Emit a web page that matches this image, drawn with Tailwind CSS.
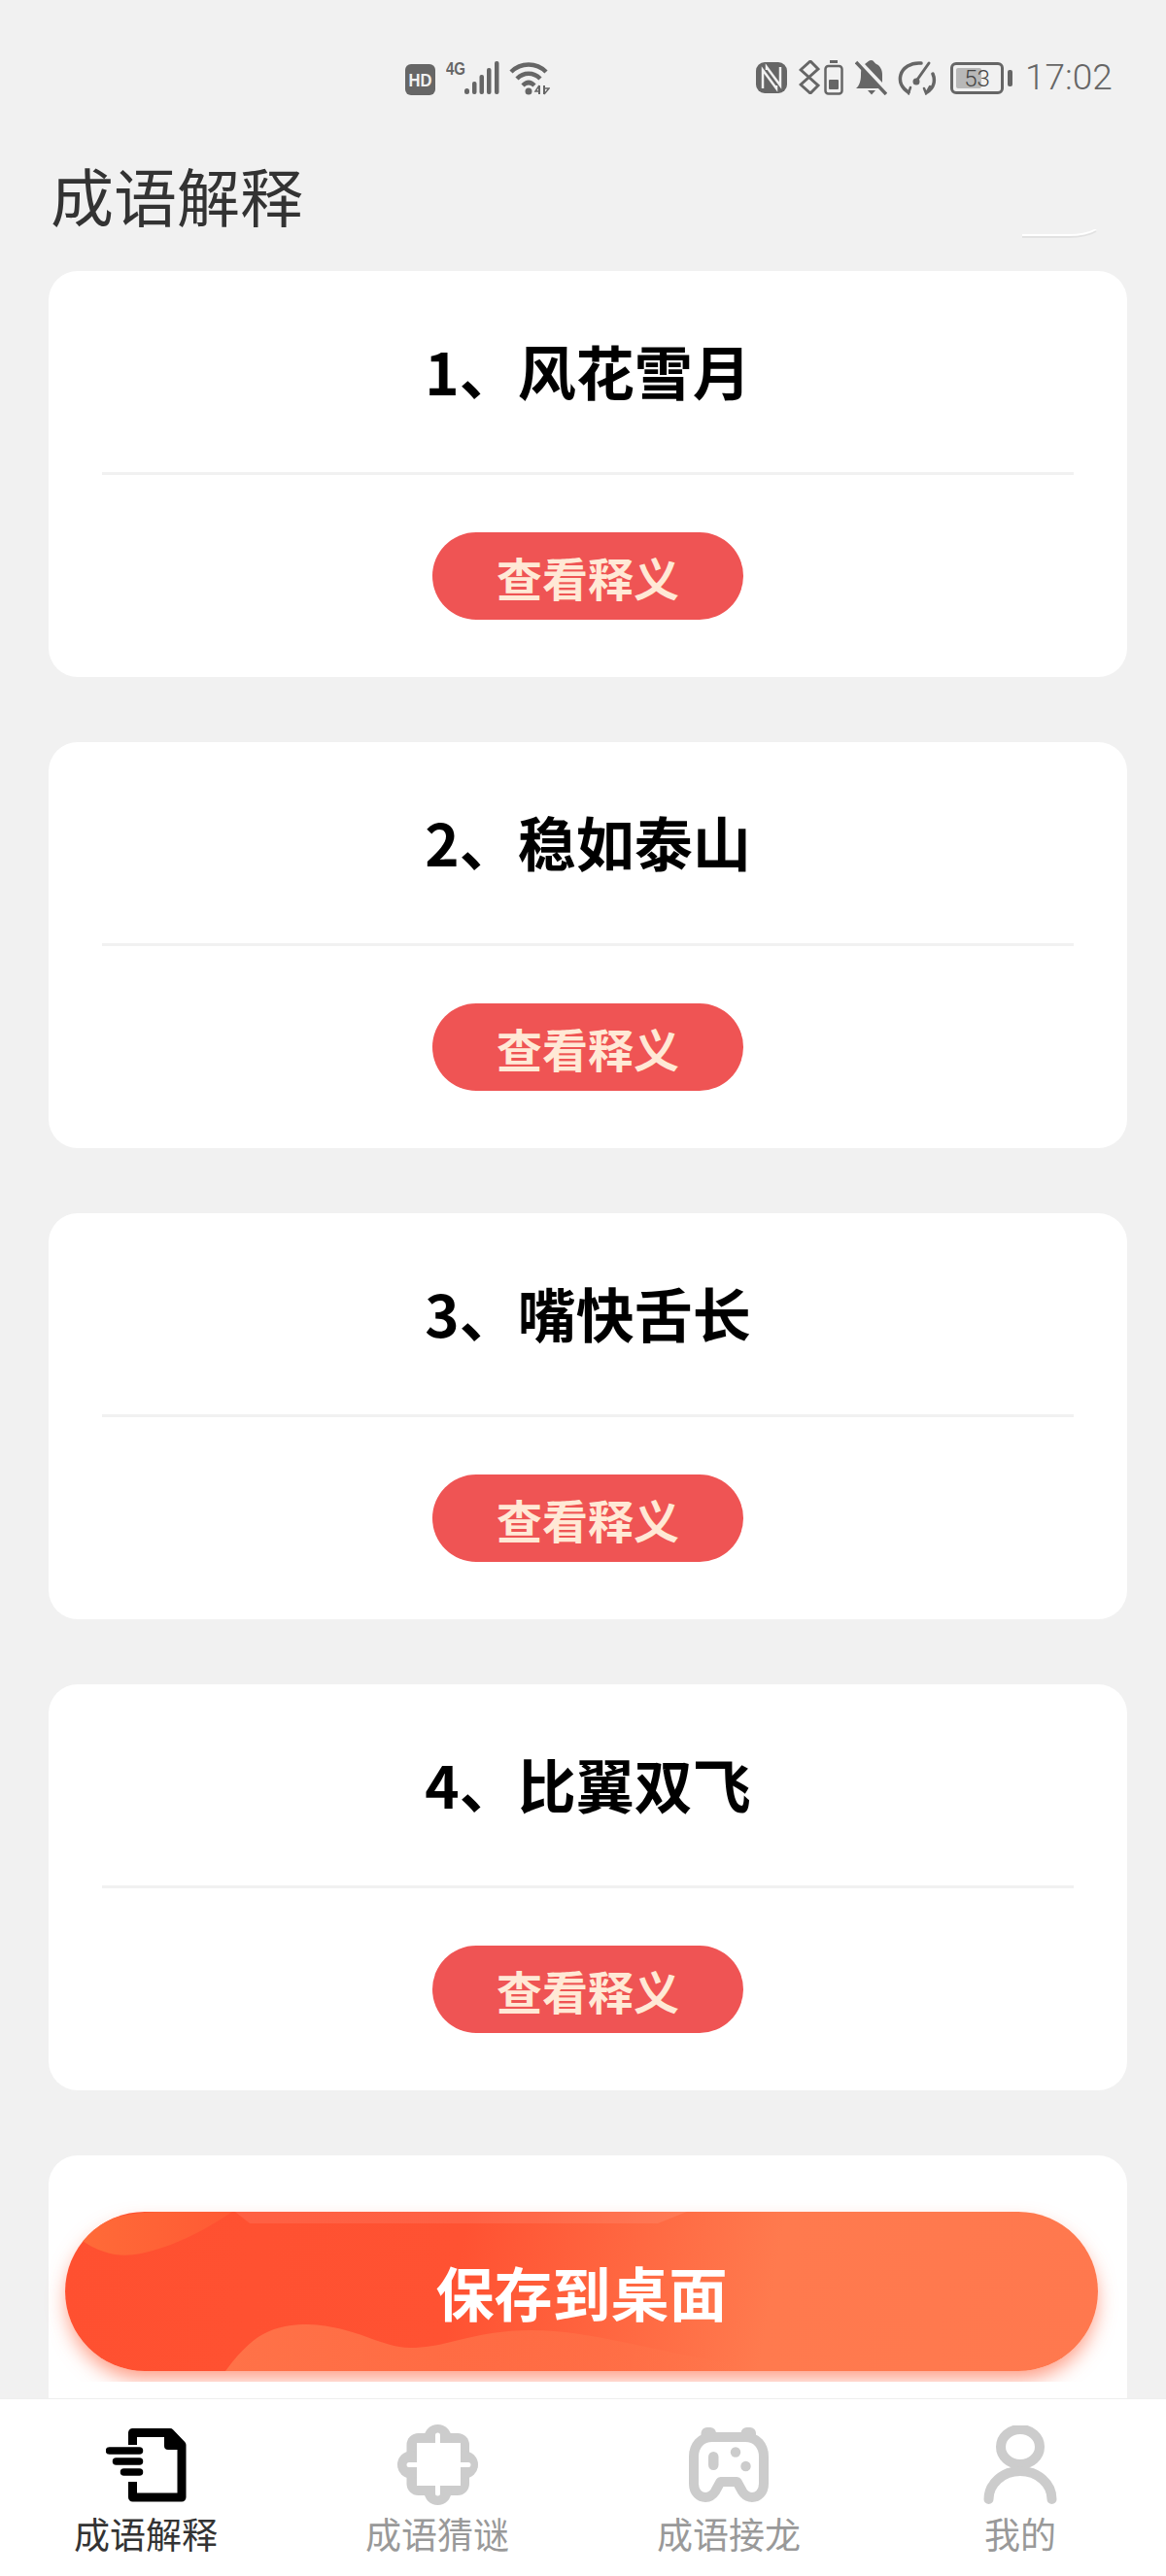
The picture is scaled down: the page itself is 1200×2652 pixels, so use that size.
<!DOCTYPE html>
<html lang="zh-CN">
<head>
  <meta charset="UTF-8">
  <title>成语解释</title>
  <script src="https://cdn.jsdelivr.net/npm/@tailwindcss/browser@4"></script>
</head>
<body class="bg-[#f1f1f1] font-['Noto_Sans_CJK_SC','Noto_Sans',sans-serif]">
  <div class="relative w-[1200px] h-[2652px] overflow-hidden flex flex-col">

    <!-- status bar -->
    <div class="h-[100px] shrink-0 flex items-start pt-[62px] pl-[417px] pr-[58px] text-[#666]">
      <svg class="w-[31px] h-[32px] mt-[4px]" viewBox="0 0 31 32"><rect width="31" height="32" rx="6" fill="#666"/><text x="15.500" y="23" text-anchor="middle" font-size="19" font-weight="700" font-family="Liberation Sans Narrow, Liberation Sans" fill="#f1f1f1" textLength="24" lengthAdjust="spacingAndGlyphs">HD</text></svg>
      <svg class="w-[56px] h-[36px] ml-[11px]" viewBox="0 0 56 36" fill="#666">
        <text x="0" y="15" font-size="18" font-weight="700" font-family="Liberation Sans" textLength="20" lengthAdjust="spacingAndGlyphs">4G</text>
        <rect x="19" y="29" width="5" height="6" rx="2.500"/><rect x="27" y="22" width="4.500" height="13" rx="2"/><rect x="34.500" y="15" width="4.500" height="20" rx="2"/><rect x="42" y="8" width="4.500" height="27" rx="2"/><rect x="50" y="1" width="4.500" height="34" rx="2"/>
      </svg>
      <svg class="w-[42px] h-[36px] ml-[9px]" viewBox="0 0 42 36" fill="none" stroke="#666" stroke-width="4.500">
        <path d="M2 12 C12 2 28 2 38 12"/><path d="M8 19 C15 12 25 12 32 19"/><path d="M14 26 C18 22 22 22 26 26"/>
        <circle cx="20" cy="32" r="3.500" fill="#666" stroke="none"/>
        <path d="M31 26 V35 M36 26 V35" stroke-width="2"/><path d="M31 26 L27 32 H31 M36 35 L41 29 H36" stroke-width="1.500"/>
      </svg>
      <div class="flex-1"></div>
      <svg class="w-[32px] h-[32px] mt-[2px]" viewBox="0 0 32 32"><rect width="32" height="32" rx="9" fill="#666"/><path d="M7 27 V8 L21 27 V24 M25 5 V24 L11 5 V8" fill="none" stroke="#f1f1f1" stroke-width="2.500"/></svg>
      <svg class="w-[22px] h-[35px] ml-[12px]" viewBox="0 0 22 35" fill="none" stroke="#666" stroke-width="3"><path d="M1 9 L20 26 L12 34 L3 26 M3 9 L12 1 L20 9 L1 26"/></svg>
      <svg class="w-[20px] h-[36px] ml-[4px]" viewBox="0 0 20 36"><rect x="6" y="0" width="8" height="3" fill="#666"/><rect x="1.500" y="6" width="17" height="28.500" rx="3" fill="none" stroke="#666" stroke-width="2.500"/><rect x="5" y="20" width="10" height="10" rx="1" fill="#666"/></svg>
      <svg class="w-[33px] h-[36px] ml-[12px]" viewBox="0 0 33 36"><path d="M1 29 C5 26 6 20 6 15 C6 12 6 10 7 8 L27 29 Z" fill="#666"/><path d="M10 4 C13 2 14 0 17 0 C19 0 20 3 22 4 C26 6 28 10 28 15 V23 Z" fill="#666"/><path d="M1 2 L32 35" fill="none" stroke="#666" stroke-width="3.500"/><path d="M13 31 H21 L17 35.500 Z" fill="#666"/></svg>
      <svg class="w-[40px] h-[36px] ml-[11px]" viewBox="0 0 40 36" fill="none" stroke="#666" stroke-width="3.500" stroke-linecap="round"><path d="M11 33 C4 29 1 22 3 15 C5 8 13 2 24 3"/><path d="M36 14 C39 21 37 29 30 33"/><path d="M32 3 L20 20" stroke-width="3"/><circle cx="19" cy="22" r="3.500" fill="#666" stroke="none"/><path d="M6 28 L11 34 L13 28 M33 27 L29 34 L27 29" stroke-width="2.500"/></svg>
      <div class="relative w-[55px] h-[33px] ml-[14px] mt-[2px] border-[3px] border-[#666] rounded-[6px]">
        <div class="absolute left-[3px] top-[3px] bottom-[3px] w-[26px] bg-[#b8b8b8] rounded-[2px]"></div>
        <div class="absolute inset-0 flex items-center justify-center text-[24px] leading-none font-['Roboto'] font-light text-[#444]">53</div>
      </div>
      <div class="w-[5px] h-[17px] ml-[4px] mt-[10px] bg-[#666] rounded-[2px]"></div>
      <div class="w-[87px] ml-[13px] mt-[-2px] text-[37px] leading-[40px] font-['Roboto'] font-light text-[#666] whitespace-nowrap">17:02</div>
    </div>

    <!-- header -->
    <div class="relative h-[179px] shrink-0 pl-[52px] pt-[60px]">
      <h1 class="text-[65px] leading-[80px] text-[#333] font-normal">成语解释</h1>
      <svg class="absolute left-[1050px] top-[136px] w-[82px] h-[10px]" viewBox="0 0 82 10" fill="none"><path d="M2 8 H50 C60 8 70 7 78 2" stroke="#e2e2e2" stroke-width="2"/><path d="M2 6 H50 C60 6 70 5 78 0" stroke="#fff" stroke-width="2"/></svg>
    </div>

    <!-- idiom cards -->
    <div class="flex-1 overflow-hidden pl-[50px] pr-[40px]">
      <div class="bg-white rounded-[30px] h-[418px] mb-[67px] flex flex-col">
        <div class="h-[207px] shrink-0 pb-[3px] flex items-center justify-center text-[60px] leading-[80px] font-bold text-black">1、风花雪月</div>
        <div class="mx-[55px] h-[3px] shrink-0 bg-[#f1f1f1]"></div>
        <div class="flex-1 flex items-center justify-center"><button class="w-[320px] h-[90px] rounded-full bg-[#ef5454] text-[#ffe9d6] text-[47px] leading-none font-bold">查看释义</button></div>
      </div>
      <div class="bg-white rounded-[30px] h-[418px] mb-[67px] flex flex-col">
        <div class="h-[207px] shrink-0 pb-[3px] flex items-center justify-center text-[60px] leading-[80px] font-bold text-black">2、稳如泰山</div>
        <div class="mx-[55px] h-[3px] shrink-0 bg-[#f1f1f1]"></div>
        <div class="flex-1 flex items-center justify-center"><button class="w-[320px] h-[90px] rounded-full bg-[#ef5454] text-[#ffe9d6] text-[47px] leading-none font-bold">查看释义</button></div>
      </div>
      <div class="bg-white rounded-[30px] h-[418px] mb-[67px] flex flex-col">
        <div class="h-[207px] shrink-0 pb-[3px] flex items-center justify-center text-[60px] leading-[80px] font-bold text-black">3、嘴快舌长</div>
        <div class="mx-[55px] h-[3px] shrink-0 bg-[#f1f1f1]"></div>
        <div class="flex-1 flex items-center justify-center"><button class="w-[320px] h-[90px] rounded-full bg-[#ef5454] text-[#ffe9d6] text-[47px] leading-none font-bold">查看释义</button></div>
      </div>
      <div class="bg-white rounded-[30px] h-[418px] mb-[67px] flex flex-col">
        <div class="h-[207px] shrink-0 pb-[3px] flex items-center justify-center text-[60px] leading-[80px] font-bold text-black">4、比翼双飞</div>
        <div class="mx-[55px] h-[3px] shrink-0 bg-[#f1f1f1]"></div>
        <div class="flex-1 flex items-center justify-center"><button class="w-[320px] h-[90px] rounded-full bg-[#ef5454] text-[#ffe9d6] text-[47px] leading-none font-bold">查看释义</button></div>
      </div>
      <div class="bg-white rounded-[30px] h-[418px]"></div>
    </div>

    <!-- tab bar -->
    <div class="h-[183px] shrink-0 bg-white border-t border-[#eeeeee] grid grid-cols-4 pt-[26px]">
      <div class="flex flex-col items-center">
        <div class="h-[83px] flex items-center">
          <svg class="w-[83px] h-[76px]" viewBox="0 0 83 76" fill="none" stroke="#000">
            <path d="M27.500 17 V4.500 H66 L78 17 V71 H27.500 V55" stroke-width="9" stroke-linejoin="round"/>
            <path d="M60 6 V18 Q60 22 64 22 H76 V16 L66 6 Z" fill="#000" stroke="none"/>
            <path d="M3.500 23 H34.500 M10.500 34 H34.500 M18.500 45 H34.500" stroke-width="7.500" stroke-linecap="round"/>
          </svg>
        </div>
        <span class="mt-[7px] text-[37px] leading-[44px] text-[#333]">成语解释</span>
      </div>
      <div class="flex flex-col items-center">
        <div class="h-[83px] flex items-center">
          <svg class="w-[83px] h-[83px]" viewBox="0 0 83 83" fill="#cccccc">
            <rect x="9.500" y="9" width="64.500" height="64" rx="12"/>
            <circle cx="41.500" cy="14" r="14"/><circle cx="41.500" cy="69" r="14"/><circle cx="14" cy="41.500" r="14"/><circle cx="69" cy="41.500" r="14"/>
            <rect x="20" y="19" width="45" height="44" fill="#fff"/>
            <path d="M41.500 11 V20 M41.500 62 V71 M12 41.500 H21 M64 41.500 H73" stroke="#fff" stroke-width="5" stroke-linecap="round"/>
          </svg>
        </div>
        <span class="mt-[7px] text-[37px] leading-[44px] text-[#999]">成语猜谜</span>
      </div>
      <div class="flex flex-col items-center">
        <div class="h-[83px] flex items-center">
          <svg class="w-[82px] h-[77px]" viewBox="0 0 82 77" fill="#cccccc">
            <rect x="12.500" y="0" width="15.500" height="14" rx="6"/><rect x="53.500" y="0" width="15.500" height="14" rx="6"/>
            <path d="M24 10 H58 C70 10 77 19 77 30 V58 C77 67 71 72 65 72 C60 72 57 69 55 66 L49.500 56 H32.500 L27 66 C25 69 22 72 17 72 C11 72 5 67 5 58 V30 C5 19 12 10 24 10 Z" fill="none" stroke="#cccccc" stroke-width="10" stroke-linejoin="round"/>
            <rect x="20" y="25" width="10.500" height="19" rx="5.250"/><circle cx="48" cy="25.500" r="5.200"/><circle cx="58.500" cy="40" r="5.200"/>
          </svg>
        </div>
        <span class="mt-[7px] text-[37px] leading-[44px] text-[#999]">成语接龙</span>
      </div>
      <div class="flex flex-col items-center">
        <div class="h-[83px] flex items-center">
          <svg class="w-[76px] h-[81px]" viewBox="0 0 76 81" fill="none" stroke="#cccccc" stroke-width="10" stroke-linecap="round">
            <ellipse cx="38" cy="22" rx="20" ry="18"/>
            <path d="M5.500 76 C5.500 60 20 47 38 47 C56 47 70.500 60 70.500 76"/>
          </svg>
        </div>
        <span class="mt-[7px] text-[37px] leading-[44px] text-[#999]">我的</span>
      </div>
    </div>

    <!-- floating save button: shadow is cut off at the bottom like the reference image -->
    <div class="absolute left-[40px] top-[2262px] w-[1120px] h-[190px] overflow-hidden">
      <button class="absolute left-[27px] top-[15px] w-[1063px] h-[164px] rounded-full overflow-hidden text-white text-[60px] font-bold leading-none bg-[linear-gradient(100deg,#ff5030_0%,#ff5232_38%,#ff7a4e_68%,#ff784e_100%)] shadow-[0_10px_20px_-2px_rgba(255,90,50,0.6)]">
        <svg class="absolute inset-0 w-full h-full" viewBox="0 0 1063 164" preserveAspectRatio="none">
          <defs>
            <linearGradient id="wave" x1="0" x2="1" y1="0" y2="0"><stop offset="0" stop-color="#ff7248"/><stop offset="0.6" stop-color="#ff7248" stop-opacity="0.7"/><stop offset="1" stop-color="#ff7a4e" stop-opacity="0"/></linearGradient>
            <linearGradient id="blob" x1="0" x2="1" y1="0" y2="0"><stop offset="0" stop-color="#ff6b38"/><stop offset="1" stop-color="#ff5a34"/></linearGradient>
          </defs>
          <path d="M15 28 C45 50 70 46 90 40 C120 32 150 15 172 0 H100 C60 0 30 10 15 28 Z" fill="url(#blob)"/>
          <path d="M175 0 H640 L610 12 H190 Z" fill="#ffffff" fill-opacity="0.09"/>
          <path d="M165 164 C190 130 210 116 250 116 C300 118 325 140 355 140 C395 140 420 122 480 122 C550 122 620 150 740 164 Z" fill="url(#wave)"/>
        </svg>
        <span class="relative">保存到桌面</span>
      </button>
    </div>
  </div>
</body>
</html>
